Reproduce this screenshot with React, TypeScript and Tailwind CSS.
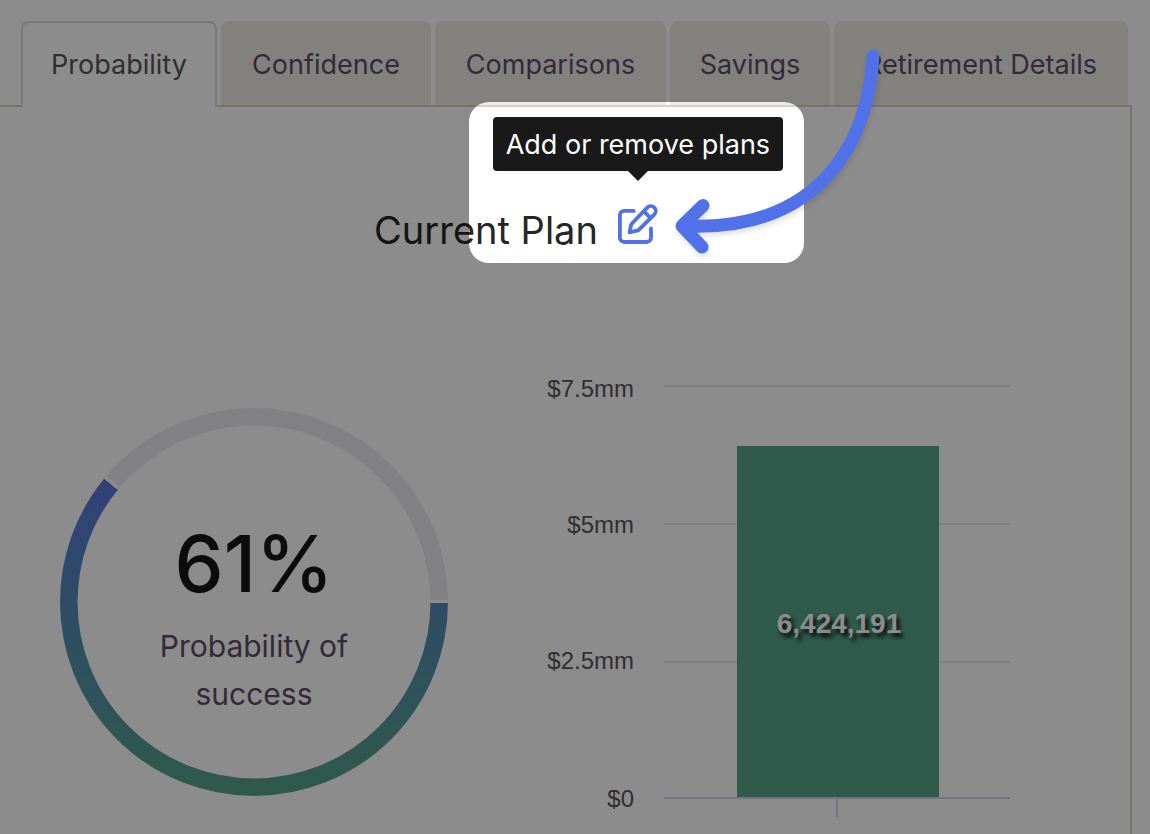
import React from 'react';
import { clsx } from 'clsx';

const tabs = ['Probability', 'Confidence', 'Comparisons', 'Savings', 'Retirement Details'];

const gridLines = [12, 150, 288];

const axisLabels = [
    { text: '$7.5mm', y: 23 },
    { text: '$5mm', y: 159 },
    { text: '$2.5mm', y: 295 },
    { text: '$0', y: 433 },
];

const TabBar: React.FC<{ active: string }> = ({ active }) => (
    <div role="tablist" className="grid grid-cols-[196fr_210fr_231fr_160fr_294fr] gap-1 pt-[21px] pl-[21px] pr-[22px]">
        {tabs.map((tab) => (
            <button
                key={tab}
                type="button"
                role="tab"
                aria-selected={tab === active}
                className={clsx(
                    'rounded-t-lg text-[27px] whitespace-nowrap flex items-center justify-center',
                    tab === active
                        ? 'h-[86px] -mb-[2px] relative bg-white border-2 border-b-0 border-[#dddddd] text-[#575757]'
                        : 'h-[84px] pt-1 bg-[#eeebe4] text-[#5c4e6b]'
                )}
            >
                {tab}
            </button>
        ))}
    </div>
);

const EditIcon = () => (
    <svg viewBox="0 0 40 40" className="w-10 h-10" fill="none" stroke="#5071e8" strokeWidth="3.8" strokeLinecap="round" strokeLinejoin="round" aria-hidden="true">
        <path d="M15.7 6.9H6.2A4.3 4.3 0 0 0 1.9 11.200v22.5A4.300 4.300 0 0 0 6.200 38h22.500a4.300 4.300 0 0 0 4.300-4.300V24.500" />
        <path d="M11.6 28.300l1.300-6.600q.2-1.200 1.100-2.200L29.200 3.600a4.900 4.900 0 0 1 7.200 6.800L21.200 25.400q-1 1-2.300 1.300z" />
        <path d="M26 7.400l6.400 6.400" />
    </svg>
);

const Pointer = () => (
    <svg
        viewBox="0 0 210 220"
        className="absolute z-30 w-[210px] h-[220px] left-[52px] -top-[164px] max-w-none pointer-events-none drop-shadow-[1px_4px_2px_rgba(0,0,0,0.1)]"
        fill="none"
        stroke="#5071e8"
        strokeWidth="13"
        strokeLinecap="round"
        strokeLinejoin="round"
        aria-hidden="true"
    >
        <path d="M203 16C198 106 147 191 16 186" />
        <path d="M33 165.500L12 186l20 21" />
    </svg>
);

const PlanHeader = () => (
    <div className="flex justify-center items-start gap-5 pt-[97px] pr-[98px]">
        <h1 className="text-[38px] leading-[52px] text-[#262626] whitespace-nowrap">Current Plan</h1>
        <div className="relative">
            <button type="button" aria-label="Add or remove plans" aria-describedby="plans-tip" className="block w-10 h-10">
                <EditIcon />
            </button>
            <div className="absolute z-10 -left-[149px] -top-[102px] w-[335px] h-[161px] rounded-[20px] pointer-events-none shadow-[0_0_0_2000px_rgba(0,0,0,0.45)]" />
            <div
                id="plans-tip"
                role="tooltip"
                className="absolute z-20 bottom-full left-1/2 -translate-x-1/2 mb-[33px] w-[290px] h-[54px] pt-[2px] rounded bg-[#191919] text-white text-[27px] whitespace-nowrap flex items-center justify-center"
            >
                Add or remove plans
                <span className="absolute top-full left-1/2 -translate-x-1/2 border-x-10 border-t-10 border-x-transparent border-t-[#191919]" />
            </div>
            <Pointer />
        </div>
    </div>
);

const SuccessRing = () => (
    <svg viewBox="0 0 388 388" className="w-full mt-[34px]" role="img" aria-label="61% probability of success">
        <defs>
            <linearGradient id="ring" gradientUnits="userSpaceOnUse" x1="0" y1="70" x2="0" y2="388">
                <stop offset="0" stopColor="#5a76dc" />
                <stop offset="0.4" stopColor="#558bbb" />
                <stop offset="1" stopColor="#57a488" />
            </linearGradient>
        </defs>
        <circle cx="194" cy="194" r="185.2" fill="none" stroke="#ebecf0" strokeWidth="17.5" />
        <circle cx="194" cy="194" r="185.2" fill="none" stroke="url(#ring)" strokeWidth="17.5" pathLength="100" strokeDasharray="61 39" />
        <path d="M370 193.5h18M58.5 80.5L45 69.5" stroke="#ffffff" strokeWidth="3" />
        <text x="194" y="184" textAnchor="middle" fontSize="78" fontWeight="500" fill="#171717">61%</text>
        <text textAnchor="middle" fontSize="30" fill="#5c4e6b">
            <tspan x="194" y="249">Probability of</tspan>
            <tspan x="194" y="297">success</tspan>
        </text>
    </svg>
);

const BalanceChart = () => (
    <svg viewBox="0 0 466 446" className="w-full" role="img" aria-label="Current plan balance 6,424,191">
        <g stroke="#e8e8e8" strokeWidth="2">
            {gridLines.map((y) => (
                <path key={y} d={`M120 ${y}H466`} />
            ))}
        </g>
        <g className="font-['Liberation_Sans',Arial,sans-serif]">
            <g fontSize="24" fill="#575757" textAnchor="end">
                {axisLabels.map(({ text, y }) => (
                    <text key={text} x="90" y={y}>{text}</text>
                ))}
            </g>
            <rect x="193" y="72" width="202" height="351" fill="#57a48a" />
            <text
                x="295"
                y="259"
                textAnchor="middle"
                fontSize="28"
                fontWeight="700"
                fill="#ffffff"
                className="[text-shadow:3px_4px_4px_rgba(0,0,0,0.9)]"
            >
                6,424,191
            </text>
        </g>
        <path d="M120 424H466M293 424V443" fill="none" stroke="#ccd6eb" strokeWidth="2" />
    </svg>
);

const App: React.FC = () => {
    return (
        <div className="min-h-screen flex flex-col overflow-hidden bg-white font-['Inter',sans-serif]">
            <TabBar active="Probability" />
            <main className="flex-1 mr-[18px] border-t-2 border-r-2 border-[#d8d2c6]">
                <PlanHeader />
                <div className="grid grid-cols-[388fr_466fr] gap-x-24 items-start pt-[118px] pl-[60px] pr-[120px]">
                    <SuccessRing />
                    <BalanceChart />
                </div>
            </main>
        </div>
    );
};

export default App;
